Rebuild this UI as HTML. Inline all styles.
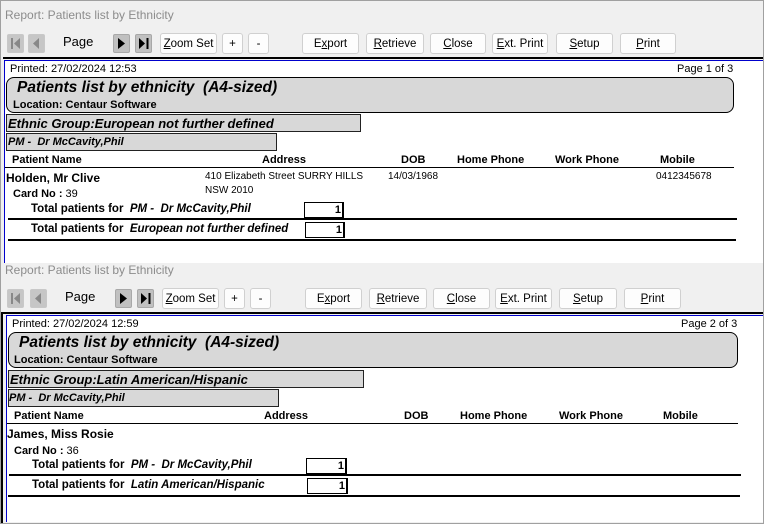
<!DOCTYPE html>
<html><head><meta charset="utf-8"><style>
*{margin:0;padding:0;box-sizing:border-box}
body{width:764px;height:524px;background:#f0f0f0;position:relative;overflow:hidden;font-family:"Liberation Sans",Arial,sans-serif;color:#000}
.a{position:absolute;white-space:nowrap}
.frame{position:absolute;left:0;top:0;width:764px;height:524px;border:1px solid #a0a0a0}
.ttl{font-size:12px;color:#8c8c8c}
.btn{position:absolute;height:21px;border:1px solid #d0d0d0;border-radius:3px;background:#fdfdfd;font-size:11.5px;text-align:center;line-height:21px}
.nav{position:absolute;width:17px;height:19px;border:1px solid #c8c8c8;border-radius:2px;background:#c6c6c6}
.nav.on{background:#c0c0c0;border-color:#a8a8a8}
.band{position:absolute;background:#d8d8d8;border:1px solid #000;border-radius:8px}
.box{position:absolute;background:#d8d8d8;border:1px solid #222}
.bi{font-weight:bold;font-style:italic}
.b{font-weight:bold}
.hl{position:absolute;background:#000}
.num{position:absolute;border:1px solid #000;border-right-width:2px;background:#fff;font-size:11px;font-weight:bold;text-align:right;padding-right:1px;line-height:14px}
</style></head><body>
<div class="frame"></div>

<!-- Pane 1 -->
<div class="a ttl" style="left:5px;top:8px">Report: Patients list by Ethnicity</div>
<div class="nav" style="left:7px;top:34px"><svg width="15" height="17"><path d="M4 3v11" stroke="#888" stroke-width="2"/><path d="M12 3v11L6 8.5z" fill="#888"/></svg></div>
<div class="nav" style="left:28px;top:34px"><svg width="15" height="17"><path d="M10 3v11L4 8.5z" fill="#888"/></svg></div>
<div class="a" style="left:63px;top:34px;font-size:13px">Page</div>
<div class="nav on" style="left:113px;top:34px"><svg width="15" height="17"><path d="M4 3v11L11 8.5z" fill="#000"/></svg></div>
<div class="nav on" style="left:135px;top:34px"><svg width="15" height="17"><path d="M3 3v11L9 8.5z" fill="#000"/><path d="M11.5 3v11" stroke="#000" stroke-width="2"/></svg></div>
<div class="btn" style="left:160px;top:33px;width:57px"><u>Z</u>oom Set</div>
<div class="btn" style="left:222px;top:33px;width:21px">+</div>
<div class="btn" style="left:248px;top:33px;width:21px">-</div>
<div class="btn" style="left:302px;top:33px;width:57px">E<u>x</u>port</div>
<div class="btn" style="left:366px;top:33px;width:58px"><u>R</u>etrieve</div>
<div class="btn" style="left:430px;top:33px;width:56px"><u>C</u>lose</div>
<div class="btn" style="left:492px;top:33px;width:56px"><u>E</u>xt. Print</div>
<div class="btn" style="left:556px;top:33px;width:57px"><u>S</u>etup</div>
<div class="btn" style="left:620px;top:33px;width:56px"><u>P</u>rint</div>
<div class="a" style="left:3px;top:57px;width:760px;height:2px;background:#000"></div>
<div class="a" style="left:4px;top:60px;width:759px;height:203px;background:#fff;border-top:1px solid #00c;border-left:1px solid #00c"></div>
<div class="a" style="left:10px;top:63px;font-size:11px">Printed: 27/02/2024 12:53</div>
<div class="a" style="left:677px;top:63px;font-size:11px">Page 1 of 3</div>
<div class="band" style="left:6px;top:77px;width:728px;height:36px"></div>
<div class="a bi" style="left:17px;top:79px;font-size:15.5px">Patients list by ethnicity&nbsp; (A4-sized)</div>
<div class="a b" style="left:13px;top:99px;font-size:11px">Location: Centaur Software</div>
<div class="box" style="left:6px;top:114px;width:355px;height:18px"></div>
<div class="a bi" style="left:8px;top:116px;font-size:13px">Ethnic Group:European not further defined</div>
<div class="box" style="left:6px;top:133px;width:271px;height:18px"></div>
<div class="a bi" style="left:8px;top:136px;font-size:11px">PM -&nbsp; Dr McCavity,Phil</div>
<div class="a b" style="left:12px;top:154px;font-size:11px">Patient Name</div>
<div class="a b" style="left:262px;top:154px;font-size:11px">Address</div>
<div class="a b" style="left:401px;top:154px;font-size:11px">DOB</div>
<div class="a b" style="left:457px;top:154px;font-size:11px">Home Phone</div>
<div class="a b" style="left:555px;top:154px;font-size:11px">Work Phone</div>
<div class="a b" style="left:660px;top:154px;font-size:11px">Mobile</div>
<div class="hl" style="left:5px;top:167px;width:729px;height:1px"></div>
<div class="a b" style="left:6px;top:171px;font-size:12px">Holden, Mr Clive</div>
<div class="a" style="left:205px;top:171px;font-size:10px">410 Elizabeth Street SURRY HILLS</div>
<div class="a" style="left:205px;top:185px;font-size:10px">NSW 2010</div>
<div class="a" style="left:388px;top:171px;font-size:10px">14/03/1968</div>
<div class="a" style="left:656px;top:171px;font-size:10px">0412345678</div>
<div class="a" style="left:13px;top:188px;font-size:11px"><b>Card No :</b> 39</div>
<div class="a" style="left:31px;top:203px;font-size:11.5px"><b>Total patients for&nbsp; <i>PM -&nbsp; Dr McCavity,Phil</i></b></div>
<div class="num" style="left:304px;top:202px;width:40px;height:16px">1</div>
<div class="hl" style="left:8px;top:218px;width:729px;height:2px"></div>
<div class="a" style="left:31px;top:223px;font-size:11.5px"><b>Total patients for&nbsp; <i>European not further defined</i></b></div>
<div class="num" style="left:305px;top:222px;width:40px;height:16px">1</div>
<div class="hl" style="left:8px;top:239px;width:728px;height:2px"></div>

<!-- Pane 2 -->
<div class="a" style="left:1px;top:263px;width:762px;height:260px;background:#f0f0f0"></div>
<div class="a ttl" style="left:5px;top:263px">Report: Patients list by Ethnicity</div>
<div class="nav" style="left:7px;top:289px"><svg width="15" height="17"><path d="M4 3v11" stroke="#888" stroke-width="2"/><path d="M12 3v11L6 8.5z" fill="#888"/></svg></div>
<div class="nav" style="left:30px;top:289px"><svg width="15" height="17"><path d="M10 3v11L4 8.5z" fill="#888"/></svg></div>
<div class="a" style="left:65px;top:289px;font-size:13px">Page</div>
<div class="nav on" style="left:115px;top:289px"><svg width="15" height="17"><path d="M4 3v11L11 8.5z" fill="#000"/></svg></div>
<div class="nav on" style="left:137px;top:289px"><svg width="15" height="17"><path d="M3 3v11L9 8.5z" fill="#000"/><path d="M11.5 3v11" stroke="#000" stroke-width="2"/></svg></div>
<div class="btn" style="left:162px;top:288px;width:57px"><u>Z</u>oom Set</div>
<div class="btn" style="left:224px;top:288px;width:21px">+</div>
<div class="btn" style="left:250px;top:288px;width:21px">-</div>
<div class="btn" style="left:305px;top:288px;width:57px">E<u>x</u>port</div>
<div class="btn" style="left:369px;top:288px;width:58px"><u>R</u>etrieve</div>
<div class="btn" style="left:433px;top:288px;width:57px"><u>C</u>lose</div>
<div class="btn" style="left:495px;top:288px;width:57px"><u>E</u>xt. Print</div>
<div class="btn" style="left:559px;top:288px;width:58px"><u>S</u>etup</div>
<div class="btn" style="left:624px;top:288px;width:57px"><u>P</u>rint</div>
<div class="a" style="left:1px;top:312px;width:762px;height:2px;background:#000"></div>
<div class="a" style="left:1px;top:312px;width:2px;height:211px;background:#000"></div>
<div class="a" style="left:6px;top:315px;width:757px;height:207px;background:#fff;border-top:1px solid #00c;border-left:1px solid #00c"></div>
<div class="a" style="left:12px;top:318px;font-size:11px">Printed: 27/02/2024 12:59</div>
<div class="a" style="left:681px;top:318px;font-size:11px">Page 2 of 3</div>
<div class="band" style="left:8px;top:332px;width:730px;height:36px"></div>
<div class="a bi" style="left:19px;top:334px;font-size:15.5px">Patients list by ethnicity&nbsp; (A4-sized)</div>
<div class="a b" style="left:14px;top:354px;font-size:11px">Location: Centaur Software</div>
<div class="box" style="left:8px;top:370px;width:356px;height:18px"></div>
<div class="a bi" style="left:10px;top:372px;font-size:13px">Ethnic Group:Latin American/Hispanic</div>
<div class="box" style="left:8px;top:389px;width:271px;height:18px"></div>
<div class="a bi" style="left:9px;top:392px;font-size:11px">PM -&nbsp; Dr McCavity,Phil</div>
<div class="a b" style="left:14px;top:410px;font-size:11px">Patient Name</div>
<div class="a b" style="left:264px;top:410px;font-size:11px">Address</div>
<div class="a b" style="left:404px;top:410px;font-size:11px">DOB</div>
<div class="a b" style="left:460px;top:410px;font-size:11px">Home Phone</div>
<div class="a b" style="left:559px;top:410px;font-size:11px">Work Phone</div>
<div class="a b" style="left:663px;top:410px;font-size:11px">Mobile</div>
<div class="hl" style="left:7px;top:423px;width:731px;height:1px"></div>
<div class="a b" style="left:7px;top:427px;font-size:12px">James, Miss Rosie</div>
<div class="a" style="left:14px;top:445px;font-size:11px"><b>Card No :</b> 36</div>
<div class="a" style="left:32px;top:459px;font-size:11.5px"><b>Total patients for&nbsp; <i>PM -&nbsp; Dr McCavity,Phil</i></b></div>
<div class="num" style="left:306px;top:458px;width:41px;height:16px">1</div>
<div class="hl" style="left:9px;top:474px;width:732px;height:2px"></div>
<div class="a" style="left:32px;top:479px;font-size:11.5px"><b>Total patients for&nbsp; <i>Latin American/Hispanic</i></b></div>
<div class="num" style="left:307px;top:478px;width:41px;height:16px">1</div>
<div class="hl" style="left:8px;top:495px;width:732px;height:2px"></div>
</body></html>
